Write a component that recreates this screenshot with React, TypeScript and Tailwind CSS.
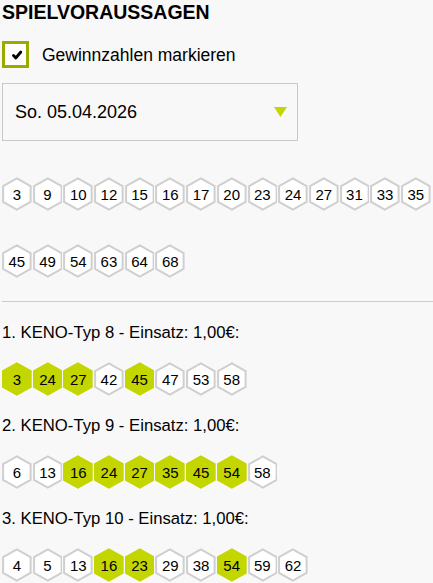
import React from "react";

const drawn = [3, 9, 10, 12, 15, 16, 17, 20, 23, 24, 27, 31, 33, 35, 45, 49, 54, 63, 64, 68];

const tips = [
  { label: "1. KENO-Typ 8 - Einsatz: 1,00€:", nums: [3, 24, 27, 42, 45, 47, 53, 58] },
  { label: "2. KENO-Typ 9 - Einsatz: 1,00€:", nums: [6, 13, 16, 24, 27, 35, 45, 54, 58] },
  { label: "3. KENO-Typ 10 - Einsatz: 1,00€:", nums: [4, 5, 13, 16, 23, 29, 38, 54, 59, 62] },
];

function Hex({ n, hit }: { n: number; hit?: boolean }) {
  return (
    <div className="relative w-[29.7px] h-[34px] flex items-center justify-center shrink-0">
      <svg className="absolute inset-0" width="29.7" height="34" viewBox="0 0 30 34">
        {hit ? (
          <polygon points="15,0 30,8.5 30,25.5 15,34 0,25.5 0,8.5" fill="#c4d600" />
        ) : (
          <polygon
            points="15,1.2 28.9,9.1 28.9,24.9 15,32.8 1.1,24.9 1.1,9.1"
            fill="#ffffff"
            stroke="#cfcfcf"
            strokeWidth="2"
          />
        )}
      </svg>
      <span className="relative text-[15px] leading-none text-black">{n}</span>
    </div>
  );
}

export default function App() {
  return (
    <div className="min-h-[583px] w-[433px] bg-[#f8f8f8] pl-[2px] text-black font-['Liberation_Sans',Arial,sans-serif]">
      <h1 className="text-[19.5px] leading-[24px] font-bold">SPIELVORAUSSAGEN</h1>

      <label className="mt-[17px] flex items-center gap-[13px]">
        <span className="w-[27px] h-[27px] border-[3px] border-[#9aaa00] bg-white flex items-center justify-center">
          <svg width="10" height="10" viewBox="0 0 10 10" className="ml-[2px]">
            <path d="M1.5 5.5 L3.8 8 L8.8 2" fill="none" stroke="#000" strokeWidth="2.8" strokeLinecap="round" strokeLinejoin="round" />
          </svg>
        </span>
        <span className="text-[17.5px] leading-[24px]">Gewinnzahlen markieren</span>
      </label>

      <div className="mt-[15px] w-[296px] h-[58px] border border-[#c8c8c8] flex items-center justify-between pl-[12px] pr-[10px]">
        <span className="text-[18px]">So. 05.04.2026</span>
        <svg width="13" height="10" viewBox="0 0 13 10">
          <polygon points="0,0 13,0 6.5,10" fill="#c4d600" />
        </svg>
      </div>

      <div className="mt-[36px] flex flex-wrap gap-x-[1px] gap-y-[33px]">
        {drawn.map((n) => (
          <Hex key={n} n={n} />
        ))}
      </div>

      <div className="mt-[23px] h-px bg-[#cccccc]" />

      <div className="pt-[19px]">
        {tips.map((t) => (
          <div key={t.label} className="mb-[18px]">
            <div className="text-[16.7px] leading-[24px]">{t.label}</div>
            <div className="mt-[17px] flex gap-[1px]">
              {t.nums.map((n) => (
                <Hex key={n} n={n} hit={drawn.includes(n)} />
              ))}
            </div>
          </div>
        ))}
      </div>
    </div>
  );
}
